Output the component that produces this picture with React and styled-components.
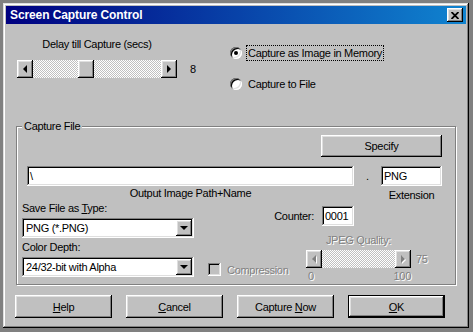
import React from "react";
import styled, { createGlobalStyle, css } from "styled-components";

const GlobalStyle = createGlobalStyle`
  html, body {
    margin: 0;
    padding: 0;
    background: #808080;
  }
  body {
    font-family: "Liberation Sans", Arial, sans-serif;
    font-size: 11px;
    letter-spacing: -0.3px;
    color: #000;
  }
`;

// classic 3D bevels
const raised = css`
  box-shadow: inset -1px -1px #000, inset 1px 1px #fff, inset -2px -2px #808080,
    inset 2px 2px #dfdfdf;
`;

const sunken = css`
  box-shadow: inset -1px -1px #fff, inset 1px 1px #808080, inset -2px -2px #dfdfdf,
    inset 2px 2px #000;
`;

const disabledText = css`
  color: #808080;
  text-shadow: 1px 1px 0 #fff;
`;

const Desktop = styled.div`
  width: 473px;
  height: 332px;
  box-sizing: border-box;
  padding: 3px 4px 4px 3px;
`;

const Window = styled.div`
  height: 100%;
  box-sizing: border-box;
  padding: 3px;
  background: #c0c0c0;
  box-shadow: inset -1px -1px #000, inset 1px 1px #dfdfdf, inset -2px -2px #808080,
    inset 2px 2px #fff;
  display: flex;
  flex-direction: column;
`;

const TitleBar = styled.div`
  height: 18px;
  display: flex;
  align-items: center;
  justify-content: space-between;
  padding: 0 3px 0 4px;
  background: linear-gradient(90deg, #000080, #1084d0);
`;

const Title = styled.span`
  color: #fff;
  font-weight: bold;
  font-size: 12px;
  letter-spacing: -0.1px;
`;

const CloseButton = styled.div`
  width: 16px;
  height: 14px;
  background: #c0c0c0;
  display: flex;
  align-items: center;
  justify-content: center;
  ${raised};
`;

const Body = styled.div`
  padding: 0 10px;
  display: flex;
  flex-direction: column;
`;

const TopSection = styled.div`
  height: 96px;
  display: flex;
`;

const DelayColumn = styled.div`
  width: 213px;
  margin-left: 1px;
  padding-top: 14px;
`;

const CenterLabel = styled.div`
  width: ${(p) => p.$width || 160}px;
  text-align: center;
  line-height: 13px;
  ${(p) => p.$disabled && disabledText};
`;

const SliderRow = styled.div`
  display: flex;
  align-items: center;
  margin-top: ${(p) => p.$top || 0}px;
`;

const Track = styled.div`
  width: ${(p) => p.$width}px;
  height: 18px;
  display: flex;
  background: repeating-conic-gradient(#c0c0c0 0% 25%, #fff 0% 50%) 0 0 / 2px 2px;
`;

const ArrowButton = styled.div`
  width: 16px;
  height: 18px;
  flex: none;
  background: #c0c0c0;
  display: flex;
  align-items: center;
  justify-content: center;
  ${raised};
`;

const TrackSpace = styled.div`
  flex: 1;
  display: flex;
  padding-left: ${(p) => p.$thumb || 0}px;
`;

const Thumb = styled.div`
  width: 16px;
  height: 18px;
  background: #c0c0c0;
  ${raised};
`;

const Value = styled.span`
  margin-left: ${(p) => p.$gap}px;
  ${(p) => p.$disabled && disabledText};
`;

const RadioColumn = styled.div`
  padding-top: 21px;
  display: flex;
  flex-direction: column;
  gap: 15px;
`;

const RadioRow = styled.label`
  height: 16px;
  display: flex;
  align-items: center;
  gap: 4px;
`;

const RadioCircle = styled.span`
  width: 12px;
  height: 12px;
  border-radius: 50%;
  background: #fff;
  display: flex;
  align-items: center;
  justify-content: center;
  box-shadow: inset 1px 1px #808080, inset -1px -1px #fff, inset 2px 2px #000,
    inset -2px -2px #dfdfdf;

  &::after {
    content: "";
    width: 4px;
    height: 4px;
    border-radius: 50%;
    background: ${(p) => (p.$checked ? "#000" : "transparent")};
  }
`;

const RadioText = styled.span`
  padding: 1px;
  border: 1px dotted ${(p) => (p.$focused ? "#000" : "transparent")};
  line-height: 12px;
`;

const GroupBox = styled.fieldset`
  margin: 0;
  padding: 0 13px 0 0;
  border: 1px solid #808080;
  box-shadow: inset 1px 1px #fff, 1px 1px #fff;
  min-width: 0;
`;

const Legend = styled.legend`
  margin-left: 5px;
  padding: 0 2px;
  background: #c0c0c0;
  line-height: 13px;
`;

const SpecifyRow = styled.div`
  display: flex;
  justify-content: flex-end;
  margin-top: 2px;
`;

const Button = styled.div`
  width: ${(p) => p.$width || 97}px;
  height: ${(p) => p.$height || 23}px;
  box-sizing: border-box;
  background: #c0c0c0;
  display: flex;
  align-items: center;
  justify-content: center;
  ${(p) =>
    p.$default
      ? css`
          box-shadow: inset 0 0 0 1px #000, inset -2px -2px #000, inset 2px 2px #fff,
            inset -3px -3px #808080, inset 3px 3px #dfdfdf;
        `
      : raised};
`;

const PathRow = styled.div`
  display: flex;
  align-items: center;
  margin-top: 9px;
  padding-left: 10px;
`;

const TextBox = styled.div`
  width: ${(p) => p.$width}px;
  height: 20px;
  box-sizing: border-box;
  padding: 0 3px;
  background: #fff;
  display: flex;
  align-items: center;
  ${sunken};
`;

const Dot = styled.span`
  width: 27px;
  text-align: center;
`;

const CaptionRow = styled.div`
  display: flex;
  padding-left: 10px;
  line-height: 13px;
  margin-top: 1px;
`;

const Caption = styled.span`
  width: ${(p) => p.$width}px;
  margin-left: ${(p) => p.$gap || 0}px;
  text-align: center;
  padding-top: ${(p) => p.$drop || 0}px;
`;

const LowerArea = styled.div`
  display: flex;
  height: 82px;
`;

const TypeColumn = styled.div`
  width: 172px;
  margin-left: 5px;
  display: flex;
  flex-direction: column;
`;

const FieldLabel = styled.div`
  line-height: 13px;
  margin-top: ${(p) => p.$top}px;
`;

const Combo = styled.div`
  height: 20px;
  margin-top: ${(p) => p.$top}px;
  box-sizing: border-box;
  padding: 2px 2px 2px 4px;
  background: #fff;
  display: flex;
  align-items: center;
  justify-content: space-between;
  ${sunken};
`;

const DropButton = styled.div`
  width: 16px;
  height: 16px;
  background: #c0c0c0;
  display: flex;
  align-items: center;
  justify-content: center;
  ${raised};
`;

const OptionsArea = styled.div`
  flex: 1;
  display: flex;
  flex-direction: column;
`;

const CounterRow = styled.div`
  display: flex;
  align-items: center;
  justify-content: flex-end;
  gap: 8px;
  margin-top: 4px;
  padding-right: 88px;
`;

const QualityRow = styled.div`
  display: flex;
  margin-top: 8px;
`;

const CheckItem = styled.div`
  display: flex;
  align-items: center;
  gap: 6px;
  margin: 23px 0 0 14px;
  width: 98px;
`;

const CheckBox = styled.span`
  width: 13px;
  height: 13px;
  flex: none;
  background: #c0c0c0;
  ${sunken};
`;

const Dim = styled.span`
  ${disabledText};
`;

const QualityBlock = styled.div`
  display: flex;
  flex-direction: column;
`;

const ScaleRow = styled.div`
  width: 103px;
  margin-top: 2px;
  padding-left: 2px;
  display: flex;
  justify-content: space-between;
  line-height: 12px;
  ${disabledText};
`;

const ButtonRow = styled.div`
  display: flex;
  gap: 14px;
  margin: 10px -1px 0 -1px;
`;

const Arrow = ({ dir, disabled }) => {
  const pts = {
    left: "5,0 5,8 1,4",
    right: "1,0 1,8 5,4",
    down: "0,1 8,1 4,5",
  }[dir];
  const horiz = dir !== "down";
  return (
    <svg width={horiz ? 6 : 8} height={horiz ? 8 : 6} viewBox={horiz ? "0 0 6 8" : "0 0 8 6"} overflow="visible">
      {disabled && <polygon points={pts} fill="#fff" transform="translate(1 1)" />}
      <polygon points={pts} fill={disabled ? "#808080" : "#000"} />
    </svg>
  );
};

const CloseGlyph = () => (
  <svg width="8" height="7" viewBox="0 0 8 7">
    <path d="M0.5 0 L7.5 7 M7.5 0 L0.5 7" stroke="#000" strokeWidth="1.8" />
  </svg>
);

const ScrollBar = ({ width, thumb, disabled }) => (
  <Track $width={width}>
    <ArrowButton>
      <Arrow dir="left" disabled={disabled} />
    </ArrowButton>
    <TrackSpace $thumb={thumb}>{!disabled && <Thumb />}</TrackSpace>
    <ArrowButton>
      <Arrow dir="right" disabled={disabled} />
    </ArrowButton>
  </Track>
);

const Radio = ({ checked, focused, children }) => (
  <RadioRow>
    <RadioCircle $checked={checked} />
    <RadioText $focused={focused}>{children}</RadioText>
  </RadioRow>
);

export default function App() {
  return (
    <>
      <GlobalStyle />
      <Desktop>
        <Window>
          <TitleBar>
            <Title>Screen Capture Control</Title>
            <CloseButton>
              <CloseGlyph />
            </CloseButton>
          </TitleBar>
          <Body>
            <TopSection>
              <DelayColumn>
                <CenterLabel>Delay till Capture (secs)</CenterLabel>
                <SliderRow $top={9}>
                  <ScrollBar width={160} thumb={45} />
                  <Value $gap={13}>8</Value>
                </SliderRow>
              </DelayColumn>
              <RadioColumn>
                <Radio checked focused>
                  Capture as Image in Memory
                </Radio>
                <Radio>Capture to File</Radio>
              </RadioColumn>
            </TopSection>

            <GroupBox>
              <Legend>Capture File</Legend>
              <SpecifyRow>
                <Button $width={121} $height={22}>
                  Specify
                </Button>
              </SpecifyRow>
              <PathRow>
                <TextBox $width={327}>\</TextBox>
                <Dot>.</Dot>
                <TextBox $width={61}>PNG</TextBox>
              </PathRow>
              <CaptionRow>
                <Caption $width={327}>Output Image Path+Name</Caption>
                <Caption $width={61} $gap={27} $drop={2}>
                  Extension
                </Caption>
              </CaptionRow>
              <LowerArea>
                <TypeColumn>
                  <FieldLabel $top={0}>
                    Save File as <u>T</u>ype:
                  </FieldLabel>
                  <Combo $top={3}>
                    <span>PNG (*.PNG)</span>
                    <DropButton>
                      <Arrow dir="down" />
                    </DropButton>
                  </Combo>
                  <FieldLabel $top={3}>Color Depth:</FieldLabel>
                  <Combo $top={3}>
                    <span>24/32-bit with Alpha</span>
                    <DropButton>
                      <Arrow dir="down" />
                    </DropButton>
                  </Combo>
                </TypeColumn>
                <OptionsArea>
                  <CounterRow>
                    <span>Counter:</span>
                    <TextBox $width={32}>0001</TextBox>
                  </CounterRow>
                  <QualityRow>
                    <CheckItem>
                      <CheckBox />
                      <Dim>Compression</Dim>
                    </CheckItem>
                    <QualityBlock>
                      <CenterLabel $width={105} $disabled>
                        JPEG Quality:
                      </CenterLabel>
                      <SliderRow $top={3}>
                        <ScrollBar width={105} disabled />
                        <Value $gap={5} $disabled>
                          75
                        </Value>
                      </SliderRow>
                      <ScaleRow>
                        <span>0</span>
                        <span>100</span>
                      </ScaleRow>
                    </QualityBlock>
                  </QualityRow>
                </OptionsArea>
              </LowerArea>
            </GroupBox>

            <ButtonRow>
              <Button>
                <span>
                  <u>H</u>elp
                </span>
              </Button>
              <Button>
                <span>
                  <u>C</u>ancel
                </span>
              </Button>
              <Button>
                <span>
                  Capture <u>N</u>ow
                </span>
              </Button>
              <Button $default>
                <span>
                  <u>O</u>K
                </span>
              </Button>
            </ButtonRow>
          </Body>
        </Window>
      </Desktop>
    </>
  );
}
